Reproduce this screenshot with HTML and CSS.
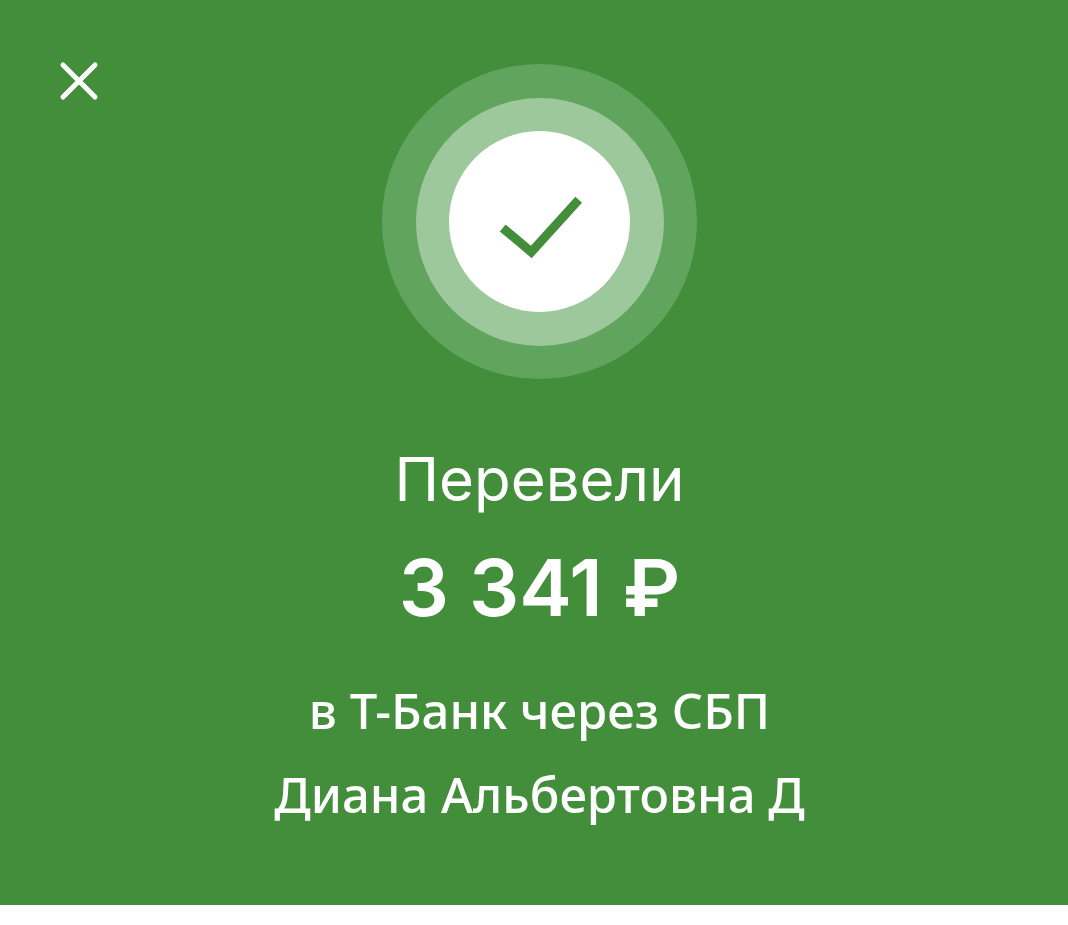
FILE: index.html
```html
<!DOCTYPE html>
<html lang="ru">
<head>
<meta charset="utf-8">
<title>Перевели</title>
<link rel="stylesheet" href="styles.css">
</head>
<body>
<main class="panel">
  <button class="close" aria-label="Закрыть">
    <svg class="close-icon" viewBox="0 0 40 40"><path d="M4 4L36 36M36 4L4 36"/></svg>
  </button>
  <div class="content">
    <div class="ring-outer"><div class="ring-mid"><div class="ring-inner">
      <svg class="check" viewBox="0 0 84 70"><path d="M4.7 34L33.3 58L80.7 5.7"/></svg>
    </div></div></div>
    <h1 class="title">Перевели</h1>
    <p class="amount">3 341 ₽</p>
    <p class="line line-bank">в Т-Банк через СБП</p>
    <p class="line line-name">Диана Альбертовна Д</p>
  </div>
</main>
</body>
</html>
```
FILE: styles.css
```css
* { box-sizing: border-box; }
html, body { margin: 0; background: #fff; }
.panel {
  height: 905px;
  background: #438e3b;
  color: #fff;
  display: flex;
  align-items: flex-start;
  padding: 61px 88px 0 59px;
}
.close {
  flex: none;
  width: 40px;
  height: 40px;
  padding: 0;
  border: 0;
  background: none;
  display: block;
}
.close-icon { display: block; width: 40px; height: 40px; fill: none; stroke: #fff; stroke-width: 5; stroke-linecap: round; }
.content { flex: 1; display: flex; flex-direction: column; align-items: center; padding-top: 3px; }
.ring-outer, .ring-mid, .ring-inner { border-radius: 50%; display: flex; align-items: center; justify-content: center; }
.ring-outer { width: 315px; height: 315px; background: #60a45e; }
.ring-mid { width: 248px; height: 248px; background: #9cc89b; }
.ring-inner { width: 181px; height: 181px; background: #fff; }
.check { display: block; width: 84px; height: 70px; fill: none; stroke: #438e3b; stroke-width: 9; margin-top: 15px; margin-left: 1px; }
.title { margin: 65px 0 0; font: 400 60px/70px "Inter", sans-serif; }
.amount { margin: 28px 0 0; font: 600 79px/90px "Inter", sans-serif; }
.line { margin: 0; font: 500 49px/62px "Noto Sans", sans-serif; }
.line-bank { margin-top: 47px; }
.line-name { margin-top: 22px; }
```
